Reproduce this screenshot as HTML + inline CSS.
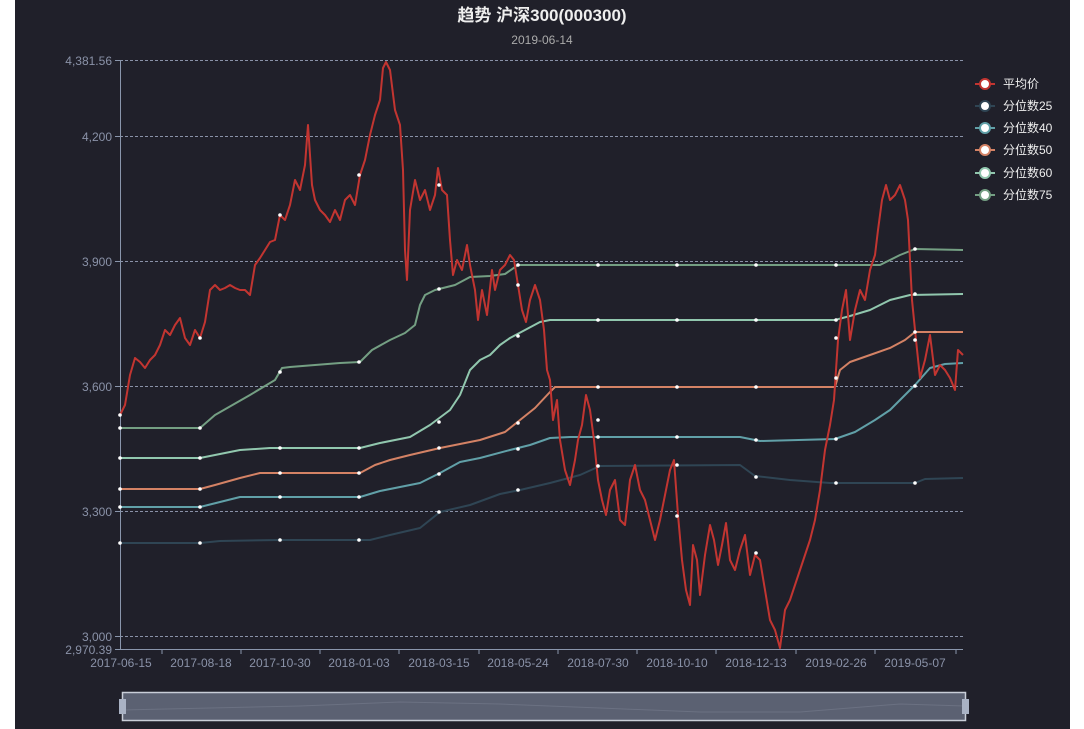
<!DOCTYPE html>
<html><head><meta charset="utf-8"><style>
html,body{margin:0;padding:0;background:#fff;}
#c{position:absolute;left:15px;top:0;width:1055px;height:729px;background:#20202a;}
svg{position:absolute;left:0;top:0}
text{font-family:"Liberation Sans","Noto Sans CJK SC",sans-serif;}
</style></head><body>
<div id="c"></div>
<svg width="1084" height="729" viewBox="0 0 1084 729">
<text x="542" y="21" text-anchor="middle" font-size="17" font-weight="bold" fill="#eee">趋势 沪深300(000300)</text>
<text x="542" y="44" text-anchor="middle" font-size="12" fill="#aaa">2019-06-14</text>
<g stroke="#8a92a8" stroke-dasharray="3,2" stroke-width="1">
<line x1="120" y1="60.5" x2="963" y2="60.5"/>
<line x1="120" y1="136.5" x2="963" y2="136.5"/>
<line x1="120" y1="261.5" x2="963" y2="261.5"/>
<line x1="120" y1="386.5" x2="963" y2="386.5"/>
<line x1="120" y1="511.5" x2="963" y2="511.5"/>
<line x1="120" y1="636.5" x2="963" y2="636.5"/>
</g>
<g stroke="#8a96ac" stroke-width="1">
<line x1="120.5" y1="60" x2="120.5" y2="649"/>
<line x1="120" y1="649.5" x2="963" y2="649.5"/>
<line x1="115" y1="60.5" x2="120" y2="60.5"/><line x1="115" y1="136.5" x2="120" y2="136.5"/><line x1="115" y1="261.5" x2="120" y2="261.5"/><line x1="115" y1="386.5" x2="120" y2="386.5"/><line x1="115" y1="511.5" x2="120" y2="511.5"/><line x1="115" y1="636.5" x2="120" y2="636.5"/><line x1="115" y1="649.5" x2="120" y2="649.5"/>
<line x1="162" y1="649" x2="162" y2="654"/><line x1="241" y1="649" x2="241" y2="654"/><line x1="320" y1="649" x2="320" y2="654"/><line x1="399" y1="649" x2="399" y2="654"/><line x1="479" y1="649" x2="479" y2="654"/><line x1="558" y1="649" x2="558" y2="654"/><line x1="637" y1="649" x2="637" y2="654"/><line x1="716" y1="649" x2="716" y2="654"/><line x1="796" y1="649" x2="796" y2="654"/><line x1="875" y1="649" x2="875" y2="654"/><line x1="956" y1="649" x2="956" y2="654"/>
</g>
<g font-size="12" fill="#8a92a8" text-anchor="end">
<text x="112" y="65">4,381.56</text><text x="112" y="141">4,200</text><text x="112" y="266">3,900</text><text x="112" y="391">3,600</text><text x="112" y="516">3,300</text><text x="112" y="641">3,000</text><text x="112" y="654">2,970.39</text>
</g>
<g font-size="12" fill="#8a92a8" text-anchor="middle">
<text x="121" y="667">2017-06-15</text><text x="201" y="667">2017-08-18</text><text x="280" y="667">2017-10-30</text><text x="359" y="667">2018-01-03</text><text x="439" y="667">2018-03-15</text><text x="518" y="667">2018-05-24</text><text x="598" y="667">2018-07-30</text><text x="677" y="667">2018-10-10</text><text x="756" y="667">2018-12-13</text><text x="836" y="667">2019-02-26</text><text x="915" y="667">2019-05-07</text>
</g>
<g fill="none" stroke-width="2" stroke-linejoin="round">
<polyline stroke="#2f4554" points="120,543 200,543 220,541 280,540 370,540 390,535 420,528 440,512 470,505 500,494 520,490 550,483 580,475 600,466 740,465 755,476 790,480 830,483 915,483 925,479 963,478"/>
<polyline stroke="#61a0a8" points="120,507 200,507 220,502 240,497 360,497 380,491 420,483 440,473 460,462 480,458 510,450 530,445 550,438 570,437 740,437 760,441 835,439 855,432 875,420 890,410 905,395 915,385 930,368 945,364 963,363"/>
<polyline stroke="#d48265" points="120,489 200,489 215,485 240,478 260,473 360,473 375,465 390,460 410,455 440,448 480,440 505,432 520,420 535,408 550,392 555,387 835,387 840,370 850,362 870,355 890,348 905,340 915,332 963,332"/>
<polyline stroke="#91c7ae" points="120,458 200,458 210,456 240,450 270,448 360,448 380,443 410,437 430,425 450,410 460,395 470,370 480,360 490,355 500,345 510,338 525,330 540,322 550,320 835,320 850,316 870,310 890,300 910,295 963,294"/>
<polyline stroke="#749f83" points="120,428 200,428 215,415 250,395 275,380 282,368 290,367 340,363 360,362 372,350 390,340 405,333 415,325 420,305 425,295 435,290 455,285 470,277 490,276 505,274 518,265 880,265 900,255 915,249 963,250"/>
<polyline stroke="#c23531" points="120,415 125,405 130,375 135,358 140,362 145,368 150,360 155,355 160,345 165,330 170,335 175,325 180,318 185,338 190,345 195,330 200,338 205,322 210,290 215,285 220,290 225,288 230,285 235,288 240,290 245,290 250,295 255,265 260,258 265,250 270,242 275,240 280,215 285,220 290,205 295,180 300,190 305,165 308,125 312,185 315,200 320,210 325,215 330,222 335,210 340,220 345,200 350,195 355,205 360,175 365,160 370,135 375,115 380,100 383,68 386,62 390,70 395,110 400,125 403,170 405,250 407,280 410,210 415,180 420,200 425,190 430,210 435,195 438,168 442,190 447,195 450,240 453,275 457,260 462,270 467,245 470,265 475,290 478,320 482,290 487,315 492,270 495,290 500,270 505,265 510,255 514,260 518,285 522,310 526,322 530,300 535,285 540,300 544,330 547,370 550,380 553,420 557,400 560,440 565,470 570,485 575,460 578,440 582,425 586,395 590,410 594,440 598,480 602,500 606,515 610,490 615,480 620,520 625,525 630,480 635,465 640,490 645,500 650,520 655,540 660,520 665,495 670,470 674,460 678,515 682,560 686,590 690,605 693,545 697,560 700,595 705,555 710,525 714,540 718,565 722,545 726,523 730,560 735,570 740,550 745,535 750,575 755,555 760,560 765,590 770,620 775,630 780,648 785,610 790,600 795,585 800,570 805,555 810,540 815,520 820,490 825,450 830,425 834,400 838,340 842,310 846,290 850,340 855,310 860,290 865,300 870,270 875,255 878,230 882,200 886,185 890,200 895,195 900,185 905,200 908,220 912,300 916,340 920,378 925,360 930,335 935,375 940,365 945,370 950,378 955,390 958,350 963,355"/>
</g>
<g fill="#fff">
<circle cx="120" cy="543" r="1.8"/><circle cx="200" cy="543" r="1.8"/><circle cx="280" cy="540" r="1.8"/><circle cx="359" cy="540" r="1.8"/><circle cx="439" cy="512" r="1.8"/><circle cx="518" cy="490" r="1.8"/><circle cx="598" cy="466" r="1.8"/><circle cx="677" cy="465" r="1.8"/><circle cx="756" cy="477" r="1.8"/><circle cx="836" cy="483" r="1.8"/><circle cx="915" cy="483" r="1.8"/>
<circle cx="120" cy="507" r="1.8"/><circle cx="200" cy="507" r="1.8"/><circle cx="280" cy="497" r="1.8"/><circle cx="359" cy="497" r="1.8"/><circle cx="439" cy="474" r="1.8"/><circle cx="518" cy="449" r="1.8"/><circle cx="598" cy="437" r="1.8"/><circle cx="677" cy="437" r="1.8"/><circle cx="756" cy="440" r="1.8"/><circle cx="836" cy="439" r="1.8"/><circle cx="915" cy="386" r="1.8"/>
<circle cx="120" cy="489" r="1.8"/><circle cx="200" cy="489" r="1.8"/><circle cx="280" cy="473" r="1.8"/><circle cx="359" cy="473" r="1.8"/><circle cx="439" cy="448" r="1.8"/><circle cx="518" cy="423" r="1.8"/><circle cx="598" cy="387" r="1.8"/><circle cx="677" cy="387" r="1.8"/><circle cx="756" cy="387" r="1.8"/><circle cx="836" cy="378" r="1.8"/><circle cx="915" cy="332" r="1.8"/>
<circle cx="120" cy="458" r="1.8"/><circle cx="200" cy="458" r="1.8"/><circle cx="280" cy="448" r="1.8"/><circle cx="359" cy="448" r="1.8"/><circle cx="439" cy="422" r="1.8"/><circle cx="518" cy="336" r="1.8"/><circle cx="598" cy="320" r="1.8"/><circle cx="677" cy="320" r="1.8"/><circle cx="756" cy="320" r="1.8"/><circle cx="836" cy="320" r="1.8"/><circle cx="915" cy="294" r="1.8"/>
<circle cx="120" cy="428" r="1.8"/><circle cx="200" cy="428" r="1.8"/><circle cx="280" cy="372" r="1.8"/><circle cx="359" cy="362" r="1.8"/><circle cx="439" cy="289" r="1.8"/><circle cx="518" cy="265" r="1.8"/><circle cx="598" cy="265" r="1.8"/><circle cx="677" cy="265" r="1.8"/><circle cx="756" cy="265" r="1.8"/><circle cx="836" cy="265" r="1.8"/><circle cx="915" cy="249" r="1.8"/>
<circle cx="120" cy="415" r="1.8"/><circle cx="200" cy="338" r="1.8"/><circle cx="280" cy="215" r="1.8"/><circle cx="359" cy="175" r="1.8"/><circle cx="439" cy="185" r="1.8"/><circle cx="518" cy="285" r="1.8"/><circle cx="598" cy="420" r="1.8"/><circle cx="677" cy="516" r="1.8"/><circle cx="756" cy="553" r="1.8"/><circle cx="836" cy="338" r="1.8"/><circle cx="915" cy="340" r="1.8"/>
</g>
<g font-size="12" fill="#eee">
<line x1="975" y1="84" x2="995" y2="84" stroke="#c23531" stroke-width="2"/><circle cx="985" cy="84" r="5" fill="#fff" stroke="#c23531" stroke-width="2"/><text x="1003" y="88">平均价</text>
<line x1="975" y1="106" x2="995" y2="106" stroke="#2f4554" stroke-width="2"/><circle cx="985" cy="106" r="5" fill="#fff" stroke="#2f4554" stroke-width="2"/><text x="1003" y="110">分位数25</text>
<line x1="975" y1="128" x2="995" y2="128" stroke="#61a0a8" stroke-width="2"/><circle cx="985" cy="128" r="5" fill="#fff" stroke="#61a0a8" stroke-width="2"/><text x="1003" y="132">分位数40</text>
<line x1="975" y1="150" x2="995" y2="150" stroke="#d48265" stroke-width="2"/><circle cx="985" cy="150" r="5" fill="#fff" stroke="#d48265" stroke-width="2"/><text x="1003" y="154">分位数50</text>
<line x1="975" y1="173" x2="995" y2="173" stroke="#91c7ae" stroke-width="2"/><circle cx="985" cy="173" r="5" fill="#fff" stroke="#91c7ae" stroke-width="2"/><text x="1003" y="177">分位数60</text>
<line x1="975" y1="195" x2="995" y2="195" stroke="#749f83" stroke-width="2"/><circle cx="985" cy="195" r="5" fill="#fff" stroke="#749f83" stroke-width="2"/><text x="1003" y="199">分位数75</text>
</g>
<rect x="122.5" y="692.5" width="843" height="28" fill="#5b6172" stroke="#c9ced8" stroke-width="1.5"/>
<polyline fill="none" stroke="#6b7182" stroke-width="1" points="123,710 300,706 400,702 500,704 600,708 700,712 800,712 900,704 965,706"/>
<rect x="119" y="699" width="7" height="15" fill="#a9b2c4"/><rect x="962" y="699" width="7" height="15" fill="#a9b2c4"/>
</svg>
</body></html>
